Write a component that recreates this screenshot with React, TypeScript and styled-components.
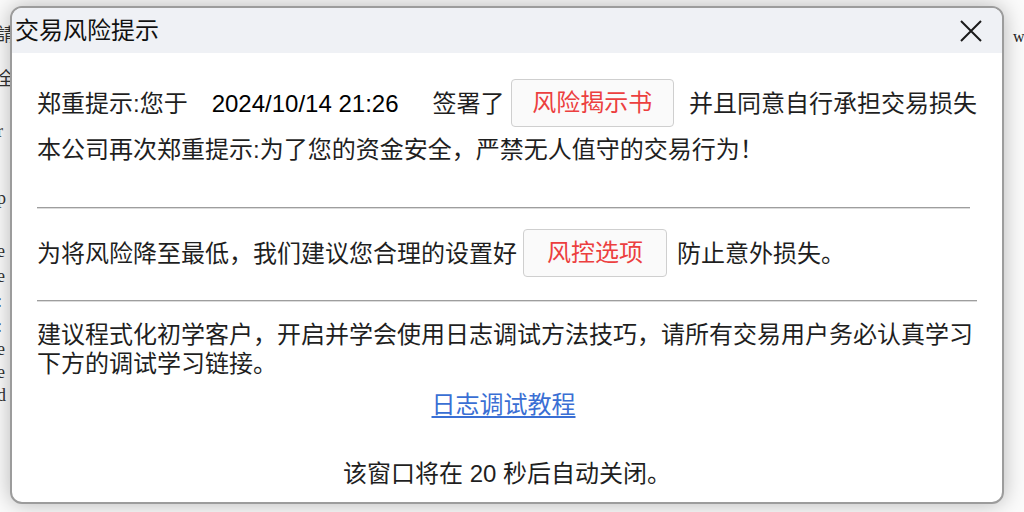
import styled, { createGlobalStyle } from "styled-components";

const GlobalStyle = createGlobalStyle`
  html, body {
    margin: 0;
    padding: 0;
    width: 1024px;
    height: 512px;
    overflow: hidden;
    background: #ffffff;
  }
  #root {
    width: 1024px;
    height: 512px;
  }
`;

// 뒤에 깔린 페이지
const Page = styled.div`
  position: relative;
  width: 1024px;
  height: 512px;
  background: #fbfbfb;
  overflow: hidden;
  font-family: "Liberation Serif", "Noto Sans CJK SC", serif;
  color: #333;
`;

const PageEdge = styled.div`
  display: flex;
  flex-direction: column;
  padding-top: 24px;
  width: 12px;
  font-size: 18px;
  line-height: 23px;
`;

const EdgeGlyph = styled.span<{ $gap?: number }>`
  display: block;
  margin-top: ${(p) => p.$gap ?? 0}px;
  margin-left: -3px;
  white-space: nowrap;
`;

const RightGlyph = styled.span`
  position: absolute;
  top: 28px;
  left: 1013px;
  font-size: 16px;
  color: #222;
`;

// 모달 창
const Dialog = styled.div`
  position: absolute;
  top: 6px;
  left: 10px;
  width: 990px;
  height: 494px;
  display: flex;
  flex-direction: column;
  background: #fff;
  border: 2px solid #9c9c9c;
  border-radius: 12px;
  overflow: hidden;
  box-shadow: 0 0 22px rgba(0, 0, 0, 0.28);
  font-family: "Liberation Sans", "Noto Sans CJK SC", sans-serif;
  color: #1f1f1f;
`;

const TitleBar = styled.div`
  display: flex;
  align-items: center;
  justify-content: space-between;
  height: 45px;
  padding: 0 17px 0 3px;
  background: #eff1f5;
`;

const Title = styled.h1`
  margin: 0;
  font-size: 24px;
  font-weight: 400;
  line-height: 30px;
  color: #111;
`;

const CloseButton = styled.button`
  display: flex;
  align-items: center;
  justify-content: center;
  width: 28px;
  height: 28px;
  padding: 0;
  border: none;
  background: transparent;
  cursor: pointer;
`;

const Body = styled.div`
  display: flex;
  flex-direction: column;
  padding: 26px 25px 0 25px;
  font-size: 24px;
`;

const Row = styled.div<{ $top?: number }>`
  display: flex;
  align-items: center;
  margin-top: ${(p) => p.$top ?? 0}px;
  line-height: 29px;
  white-space: nowrap;
`;

const Text = styled.span<{ $left?: number }>`
  margin-left: ${(p) => p.$left ?? 0}px;
`;

const DateText = styled.span`
  margin-left: 24px;
  color: #000;
`;

// 빨간 글씨 버튼
const RedButton = styled.button<{ $width: number }>`
  display: flex;
  align-items: center;
  justify-content: center;
  width: ${(p) => p.$width}px;
  height: 48px;
  margin: 0 ${(p) => (p.$width > 150 ? 15 : 10)}px 0 6px;
  padding: 0;
  border: 1px solid #cfcfcf;
  border-radius: 4px;
  background: #fafafa;
  color: #ec3f3f;
  font-family: inherit;
  font-size: 24px;
  line-height: 30px;
  cursor: pointer;
`;

const Divider = styled.hr<{ $top: number; $right?: number }>`
  margin: ${(p) => p.$top}px ${(p) => p.$right ?? 0}px 0 0;
  height: 0;
  border: none;
  border-top: 1px solid #9e9e9e;
  border-bottom: 1px solid #dcdcdc;
`;

const Paragraph = styled.p`
  margin: 18px 0 0;
  line-height: 29px;
`;

const LinkRow = styled.div`
  display: flex;
  justify-content: center;
  margin-top: 12px;
  padding-right: 7px;
  line-height: 29px;
`;

const TutorialLink = styled.a`
  color: #3a6fd4;
  text-decoration: underline;
  text-underline-offset: 3px;
  cursor: pointer;
`;

const Footer = styled.div`
  display: flex;
  justify-content: center;
  margin-top: 40px;
  line-height: 29px;
  font-size: 24px;
`;

const edgeGlyphs: [string, number][] = [
  ["請", 0],
  ["全", 21],
  ["r", 29],
  ["p", 44],
  ["e", 30],
  ["e", 2],
  [":", 2],
  [":", 2],
  ["e", 0],
  ["e", 0],
  ["d", 0],
];

export default function App() {
  return (
    <>
      <GlobalStyle />
      <Page>
        <PageEdge>
          {edgeGlyphs.map(([g, gap], i) => (
            <EdgeGlyph key={i} $gap={gap}>
              {g}
            </EdgeGlyph>
          ))}
        </PageEdge>
        <RightGlyph>w</RightGlyph>

        <Dialog>
          <TitleBar>
            <Title>交易风险提示</Title>
            <CloseButton aria-label="关闭">
              <svg width="24" height="24" viewBox="0 0 24 24">
                <path d="M2 2 L22 22 M22 2 L2 22" stroke="#1a1a1a" strokeWidth="2" fill="none" />
              </svg>
            </CloseButton>
          </TitleBar>

          <Body>
            <Row>
              <Text>郑重提示:您于</Text>
              <DateText>2024/10/14 21:26</DateText>
              <Text $left={34}>签署了</Text>
              <RedButton $width={165}>风险揭示书</RedButton>
              <Text>并且同意自行承担交易损失</Text>
            </Row>
            <Row $top={8}>
              <Text>本公司再次郑重提示:为了您的资金安全，严禁无人值守的交易行为！</Text>
            </Row>

            <Divider $top={43} $right={7} />

            <Row $top={20}>
              <Text>为将风险降至最低，我们建议您合理的设置好</Text>
              <RedButton $width={144}>风控选项</RedButton>
              <Text>防止意外损失。</Text>
            </Row>

            <Divider $top={23} />

            <Paragraph>
              建议程式化初学客户，开启并学会使用日志调试方法技巧，请所有交易用户务必认真学习
              下方的调试学习链接。
            </Paragraph>

            <LinkRow>
              <TutorialLink>日志调试教程</TutorialLink>
            </LinkRow>

            <Footer>该窗口将在 20 秒后自动关闭。</Footer>
          </Body>
        </Dialog>
      </Page>
    </>
  );
}
